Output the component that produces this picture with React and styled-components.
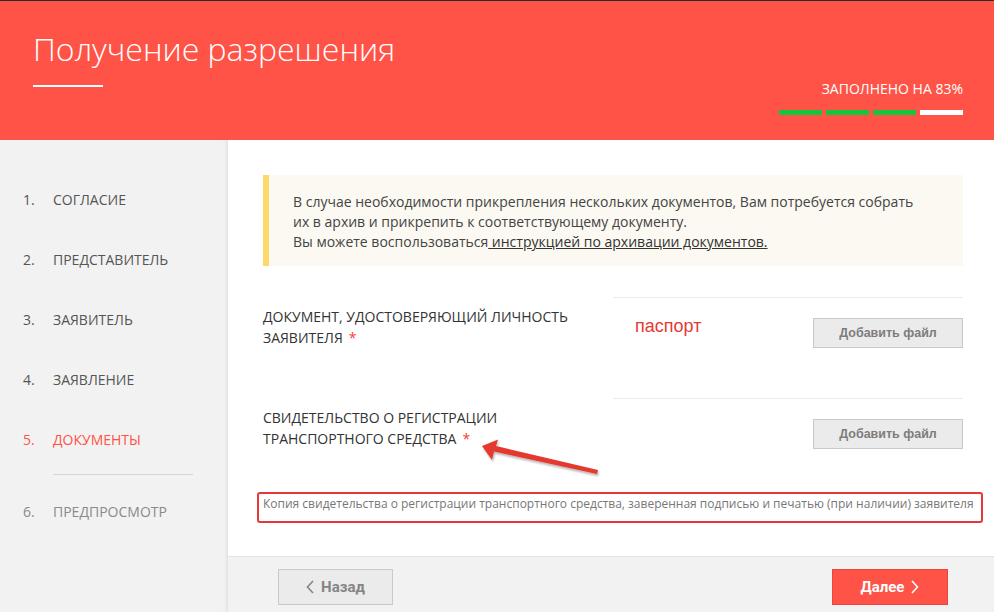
import React from 'react';
import styled, { createGlobalStyle } from 'styled-components';

const GlobalStyle = createGlobalStyle`
  html, body {
    margin: 0;
    padding: 0;
    background: #fff;
    font-family: "Open Sans", "Liberation Sans", sans-serif;
  }
  * { box-sizing: border-box; }
`;

const steps = [
  { n: '1.', label: 'СОГЛАСИЕ' },
  { n: '2.', label: 'ПРЕДСТАВИТЕЛЬ' },
  { n: '3.', label: 'ЗАЯВИТЕЛЬ' },
  { n: '4.', label: 'ЗАЯВЛЕНИЕ' },
  { n: '5.', label: 'ДОКУМЕНТЫ', active: true },
];

const bars = [true, true, true, false];

const Page = styled.div`
  position: relative;
  width: 994px;
  height: 612px;
  overflow: hidden;
  display: flex;
  flex-direction: column;
`;

const Header = styled.header`
  height: 140px;
  flex: none;
  background: #ff5347;
  border-top: 1px solid #2b2b2b;
  display: flex;
  justify-content: space-between;
  padding: 0 31px 0 33px;
`;

const TitleBlock = styled.div`
  padding-top: 26px;
`;

const Title = styled.h1`
  margin: 0;
  font-weight: 300;
  font-size: 32px;
  line-height: 44px;
  color: #fff;
`;

const TitleLine = styled.div`
  width: 70px;
  height: 2px;
  margin-top: 14px;
  background: #fff;
`;

const Progress = styled.div`
  align-self: flex-end;
  padding-bottom: 25px;
  display: flex;
  flex-direction: column;
  align-items: flex-end;
`;

const ProgressText = styled.div`
  font-size: 14px;
  line-height: 18px;
  color: #fff;
  margin-bottom: 12px;
`;

const Bars = styled.div`
  display: grid;
  grid-template-columns: repeat(4, 43px);
  column-gap: 4px;
`;

const Bar = styled.div`
  height: 5px;
  background: ${p => (p.$done ? '#17c43c' : '#fff')};
`;

const Body = styled.div`
  flex: 1;
  display: flex;
  min-height: 0;
`;

const Sidebar = styled.nav`
  width: 228px;
  flex: none;
  background: #f2f2f2;
  border-right: 1px solid #e4e4e4;
  box-shadow: inset -3px 0 3px -2px rgba(0, 0, 0, 0.06);
  padding-top: 29px;
`;

const Step = styled.div`
  height: 60px;
  display: flex;
  align-items: center;
  padding-left: 23px;
  font-size: 14px;
  color: ${p => (p.$active ? '#ff5347' : p.$muted ? '#8a8a8a' : '#555')};
`;

const StepNum = styled.span`
  width: 30px;
`;

const StepDivider = styled.div`
  width: 140px;
  height: 1px;
  margin: 5px 0 6px 53px;
  background: #d6d6d6;
`;

const Main = styled.main`
  flex: 1;
  display: flex;
  flex-direction: column;
  background: #fff;
`;

const Content = styled.div`
  flex: 1;
  padding: 35px 31px 0 35px;
`;

const Notice = styled.div`
  background: #fbf9f2;
  border-left: 6px solid #fcd96c;
  padding: 17px 30px 14px 24px;
  font-size: 14px;
  line-height: 20px;
  color: #444;
`;

const NoticeLink = styled.a`
  color: #333;
  text-decoration: underline;
`;

const Docs = styled.div`
  margin-top: 31px;
`;

const DocRow = styled.div`
  display: grid;
  grid-template-columns: 350px 350px;
  height: ${p => p.$h}px;
`;

const DocLabel = styled.div`
  padding-top: 9px;
  font-size: 14px;
  line-height: 21px;
  color: #333;
`;

const Required = styled.span`
  color: #ff3b30;
  margin-left: 6px;
`;

const DocCell = styled.div`
  border-top: 1px solid #ebebeb;
  padding: 20px 0 0 22px;
  display: flex;
  justify-content: space-between;
  align-items: flex-start;
`;

const FileName = styled.span`
  margin-top: -2px;
  font-family: "Liberation Sans", Arial, sans-serif;
  font-size: 18px;
  line-height: 20px;
  color: #e53935;
`;

const AddButton = styled.button`
  width: 150px;
  height: 30px;
  background: #ebebeb;
  border: 1px solid #c9c9c9;
  font-family: "Liberation Sans", Arial, sans-serif;
  font-weight: bold;
  font-size: 12.5px;
  color: #7d7d7d;
  padding: 0;
`;

const Hint = styled.div`
  margin: 0 -20px 0 -6px;
  border: 2px solid #e53935;
  border-radius: 3px;
  padding: 2px 4px 9px 4px;
  font-size: 12px;
  line-height: 16px;
  color: #777;
  white-space: nowrap;
`;

const Footer = styled.footer`
  height: 56px;
  flex: none;
  background: #f2f2f2;
  border-top: 1px solid #e2e2e2;
  display: flex;
  justify-content: space-between;
  align-items: flex-start;
  padding: 12px 46px 0 50px;
`;

const NavButton = styled.button`
  height: 36px;
  width: ${p => p.$w}px;
  display: flex;
  align-items: center;
  justify-content: center;
  gap: 7px;
  font-family: Roboto, "Liberation Sans", sans-serif;
  font-weight: bold;
  font-size: 15px;
  padding: 0;
  background: ${p => (p.$primary ? '#ff5347' : '#ebebeb')};
  border: 1px solid ${p => (p.$primary ? '#e8483c' : '#c9c9c9')};
  color: ${p => (p.$primary ? '#fff' : '#858585')};
`;

const ArrowMark = styled.svg`
  position: absolute;
  left: 470px;
  top: 432px;
  pointer-events: none;
`;

const Chevron = ({ dir }) => (
  <svg width="8" height="14" viewBox="0 0 8 14">
    <polyline
      points={dir === 'left' ? '7,1 1.5,7 7,13' : '1,1 6.5,7 1,13'}
      fill="none"
      stroke="currentColor"
      strokeWidth="1.6"
    />
  </svg>
);

export default function App() {
  return (
    <Page>
      <GlobalStyle />
      <Header>
        <TitleBlock>
          <Title>Получение разрешения</Title>
          <TitleLine />
        </TitleBlock>
        <Progress>
          <ProgressText>ЗАПОЛНЕНО НА 83%</ProgressText>
          <Bars>
            {bars.map((d, i) => (
              <Bar key={i} $done={d} />
            ))}
          </Bars>
        </Progress>
      </Header>
      <Body>
        <Sidebar>
          {steps.map(s => (
            <Step key={s.n} $active={s.active}>
              <StepNum>{s.n}</StepNum>
              {s.label}
            </Step>
          ))}
          <StepDivider />
          <Step $muted>
            <StepNum>6.</StepNum>
            ПРЕДПРОСМОТР
          </Step>
        </Sidebar>
        <Main>
          <Content>
            <Notice>
              В случае необходимости прикрепления нескольких документов, Вам потребуется собрать
              <br />
              их в архив и прикрепить к соответствующему документу.
              <br />
              Вы можете воспользоваться
              <NoticeLink href="#"> инструкцией по архивации документов.</NoticeLink>
            </Notice>
            <Docs>
              <DocRow $h={101}>
                <DocLabel>
                  ДОКУМЕНТ, УДОСТОВЕРЯЮЩИЙ ЛИЧНОСТЬ
                  <br />
                  ЗАЯВИТЕЛЯ<Required>*</Required>
                </DocLabel>
                <DocCell>
                  <FileName>паспорт</FileName>
                  <AddButton>Добавить файл</AddButton>
                </DocCell>
              </DocRow>
              <DocRow $h={94}>
                <DocLabel>
                  СВИДЕТЕЛЬСТВО О РЕГИСТРАЦИИ
                  <br />
                  ТРАНСПОРТНОГО СРЕДСТВА<Required>*</Required>
                </DocLabel>
                <DocCell>
                  <span />
                  <AddButton>Добавить файл</AddButton>
                </DocCell>
              </DocRow>
              <Hint>
                Копия свидетельства о регистрации транспортного средства, заверенная подписью и печатью (при наличии) заявителя
              </Hint>
            </Docs>
          </Content>
          <Footer>
            <NavButton $w={115}>
              <Chevron dir="left" />
              Назад
            </NavButton>
            <NavButton $w={116} $primary>
              Далее
              <Chevron dir="right" />
            </NavButton>
          </Footer>
        </Main>
      </Body>
      <ArrowMark width="140" height="55" viewBox="470 432 140 55">
        <defs>
          <filter id="arrowShadow" x="-20%" y="-40%" width="140%" height="180%">
            <feDropShadow dx="1" dy="2" stdDeviation="1" floodColor="#000" floodOpacity="0.3" />
          </filter>
        </defs>
        <polygon
          points="482,446 498,439.5 496,446 598,470 597,474 494,451.5 492,460"
          fill="#e5392e"
          filter="url(#arrowShadow)"
        />
      </ArrowMark>
    </Page>
  );
}
